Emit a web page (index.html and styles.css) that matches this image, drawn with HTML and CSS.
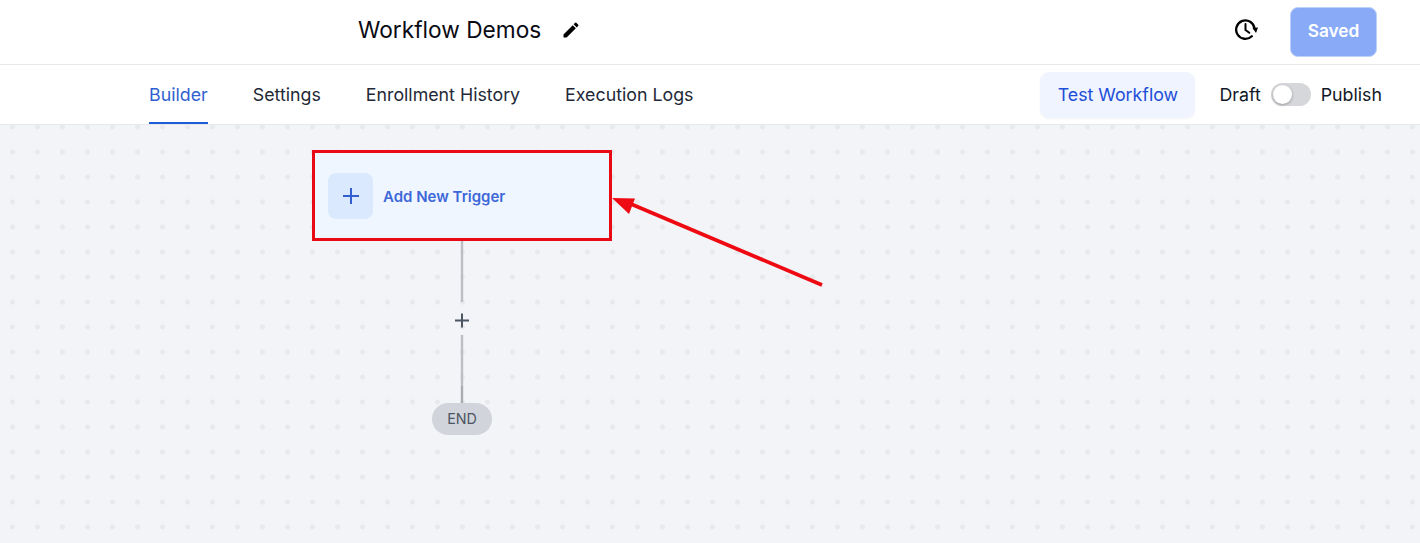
FILE: index.html
```html
<!DOCTYPE html>
<html lang="en">
<head>
<meta charset="utf-8">
<title>Workflow Demos</title>
<link rel="stylesheet" href="styles.css">
</head>
<body>
<header class="topbar">
  <div class="title-group">
    <h1 class="title">Workflow Demos</h1>
    <svg class="edit-icon" viewBox="0 0 24 24" width="20" height="20"><path d="M3 17.25V21h3.750L17.810 9.940l-3.750-3.750L3 17.250zM20.710 7.040a1 1 0 0 0 0-1.410l-2.340-2.340a1 1 0 0 0-1.410 0l-1.830 1.830 3.750 3.750 1.830-1.830z"/></svg>
  </div>
  <div class="top-actions">
    <svg class="history-icon" viewBox="0 0 24 24" width="24" height="24" fill="none" stroke="#000" stroke-width="2.300"><path d="M19.500 10.500a9.200 9.200 0 1 0-2.700 7.700" stroke-linecap="round"/><path d="M10.500 6v6l3.800 2.800" stroke-linecap="round" stroke-width="2"/><path d="M17.500 10l5.500-.5-2 5.500z" fill="#000" stroke="none"/></svg>
    <button class="saved">Saved</button>
  </div>
</header>
<nav class="tabbar">
  <div class="tabs">
    <a class="tab active">Builder</a>
    <a class="tab">Settings</a>
    <a class="tab">Enrollment History</a>
    <a class="tab">Execution Logs</a>
  </div>
  <div class="tab-actions">
    <button class="test">Test Workflow</button>
    <span class="label draft">Draft</span>
    <span class="switch"><span class="knob"></span></span>
    <span class="label">Publish</span>
  </div>
</nav>
<main class="canvas">
  <div class="trigger">
    <span class="plus-box">
      <svg viewBox="0 0 16 16" width="16" height="16"><path d="M8 0v16M0 8h16" stroke="#2f5fd0" stroke-width="2" fill="none"/></svg>
    </span>
    <span class="trigger-text">Add New Trigger</span>
  </div>
  <svg class="connector" viewBox="0 0 60 200" width="60" height="200">
    <path d="M30 0V61M30 94V145" stroke="#bcbec4" stroke-width="2.400" fill="none"/>
    <path d="M30 145V162" stroke="#a9abb1" stroke-width="2.400" fill="none"/>
    <path d="M23 79.500H37M30 72.500V86.500" stroke="#4b5563" stroke-width="2" fill="none"/>
  </svg>
  <div class="end"><span class="end-text">END</span></div>
  <svg class="arrow" viewBox="0 0 230 110" width="230" height="110">
    <path d="M211 89L20 8" stroke="#ee0a12" stroke-width="3.800" fill="none"/>
    <path d="M1 2L24 2.500L18 18z" fill="#ee0a12"/>
  </svg>
</main>
</body>
</html>
```
FILE: styles.css
```css
* { box-sizing: border-box; }
html, body { margin: 0; height: 100%; }
body {
  font-family: Inter, "Liberation Sans", sans-serif;
  background: #fff;
  color: #111827;
  display: flex;
  flex-direction: column;
  height: 543px;
  overflow: hidden;
}
.topbar {
  height: 65px;
  flex: none;
  border-bottom: 1px solid #e7e8ea;
  display: flex;
  align-items: center;
  justify-content: space-between;
  padding: 0 43px 0 358px;
}
.title-group { display: flex; align-items: center; gap: 20px; padding-bottom: 4px; }
.title { margin: 0; font-size: 22.700px; font-weight: 400; color: #0a0a14; line-height: 30px; }
.edit-icon { display: block; fill: #000; }
.top-actions { display: flex; align-items: center; gap: 31px; }
.history-icon { display: block; margin-bottom: 4px; }
.saved {
  width: 87px;
  height: 50px;
  border: 1px solid #bcd0fa;
  border-radius: 8px;
  background: #88aaf7;
  color: #fff;
  font: 600 17.300px Inter, "Liberation Sans", sans-serif;
  padding: 0 0 4px;
}
.tabbar {
  height: 60px;
  flex: none;
  border-bottom: 1px solid #e7e8ea;
  display: flex;
  align-items: center;
  justify-content: space-between;
  padding: 0 38px 0 149px;
}
.tabs { display: flex; gap: 45px; height: 100%; }
.tab {
  display: flex;
  align-items: center;
  font-size: 17.800px;
  color: #1f2937;
  height: 59px;
  padding-top: 1px;
  border-bottom: 2px solid transparent;
  margin-bottom: -1px;
}
.tab.active { color: #2f5fd0; border-bottom-color: #1d5bd8; }
.tab-actions { display: flex; align-items: center; }
.test {
  width: 155px;
  height: 46px;
  border: 0;
  border-radius: 9px;
  background: #eff4ff;
  color: #1d4ed8;
  font: 400 17.800px Inter, "Liberation Sans", sans-serif;
  padding: 0;
  margin-right: 24px;
  box-shadow: 0 1px 2px rgba(0,0,0,.05);
}
.label { font-size: 17.800px; color: #111827; }
.draft { margin-right: 10px; }
.switch {
  width: 40px;
  height: 23px;
  border-radius: 12px;
  background: #d6d7da;
  margin-right: 10px;
  padding: 2px;
  display: block;
}
.knob {
  display: block;
  width: 19px;
  height: 19px;
  border-radius: 50%;
  background: #fff;
  box-shadow: 0 1px 3px rgba(0,0,0,.3);
}
.canvas {
  position: relative;
  flex: 1;
  background-color: #f3f4f8;
  background-image: radial-gradient(circle at center, #e8e9ec 2.200px, transparent 2.800px);
  background-size: 25px 25px;
  background-position: 0 -10.500px;
}
.trigger {
  position: absolute;
  left: 312px;
  top: 25px;
  width: 300px;
  height: 91px;
  background: #f0f6ff;
  border: 3px solid #e80a14;
  display: flex;
  align-items: center;
  padding-left: 13px;
  gap: 10px;
}
.plus-box {
  width: 45px;
  height: 46px;
  border-radius: 8px;
  background: #dbe9fe;
  display: flex;
  align-items: center;
  justify-content: center;
}
.trigger-text { font-size: 15px; font-weight: 600; color: #3d68d8; padding-top: 1px; }
.connector { position: absolute; left: 432px; top: 116px; display: block; }
.end {
  position: absolute;
  left: 432px;
  top: 278px;
  width: 60px;
  height: 32px;
  border-radius: 16px;
  background: #d1d4da;
  color: #4b5563;
  font-size: 14.300px;
  display: flex;
  align-items: center;
  justify-content: center;
}
.end-text { margin-bottom: 2px; }
.arrow { position: absolute; left: 611px; top: 71px; display: block; }
```
